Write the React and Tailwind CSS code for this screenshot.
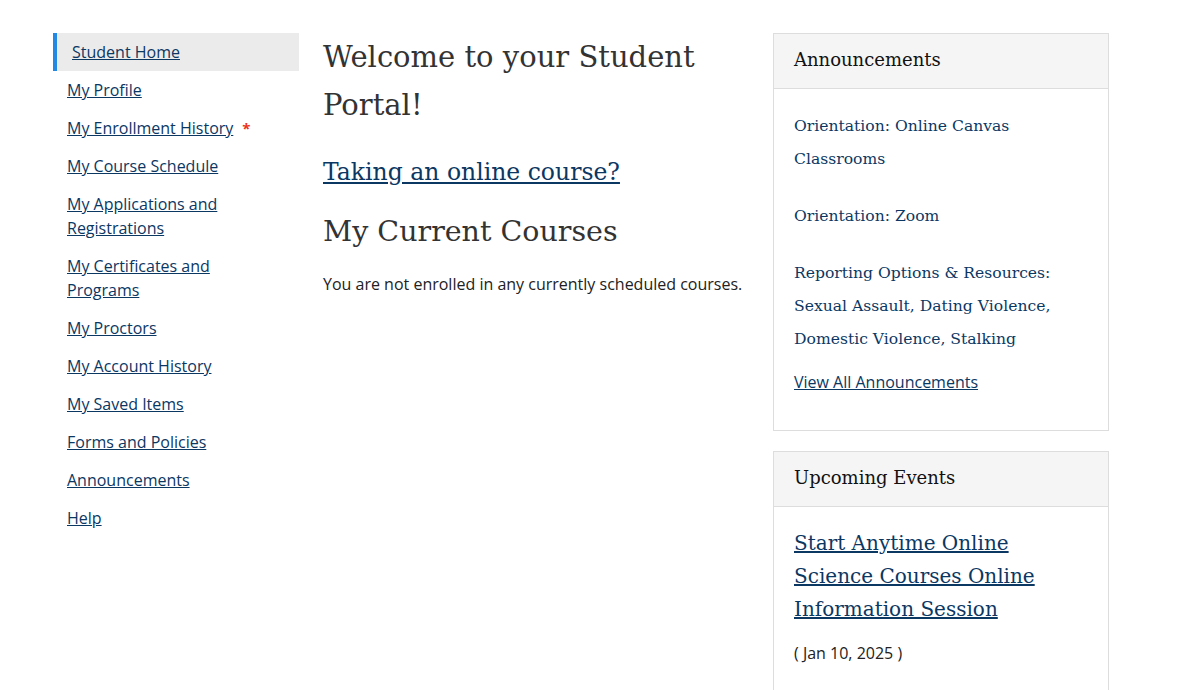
import React from "react";

const navLinks = [
  { label: "Student Home", active: true },
  { label: "My Profile" },
  { label: "My Enrollment History", flag: true },
  { label: "My Course Schedule" },
  { label: "My Applications and Registrations" },
  { label: "My Certificates and Programs" },
  { label: "My Proctors" },
  { label: "My Account History" },
  { label: "My Saved Items" },
  { label: "Forms and Policies" },
  { label: "Announcements" },
  { label: "Help" },
];

const announcements = [
  "Orientation: Online Canvas Classrooms",
  "Orientation: Zoom",
  "Reporting Options & Resources: Sexual Assault, Dating Violence, Domestic Violence, Stalking",
];

const sans = "font-['Open_Sans',sans-serif]";
const slab = "font-['DejaVu_Serif',serif]";

function SideNav() {
  return (
    <nav className="w-[246px] shrink-0">
      <ul>
        {navLinks.map((link) => (
          <li key={link.label}>
            {link.active ? (
              <a
                href="#"
                className="block border-l-4 border-[#2388e3] bg-[#ebebeb] py-[7px] pl-[15px] text-base leading-6 text-[#0b3763] underline"
              >
                {link.label}
              </a>
            ) : (
              <div className="max-w-[200px] py-[7px] pl-[14px] text-base leading-6">
                <a href="#" className="text-[#0b3763] underline">
                  {link.label}
                </a>
                {link.flag && (
                  <span className="ml-[9px] whitespace-nowrap text-[15px] font-bold text-[#ee3322]">*</span>
                )}
              </div>
            )}
          </li>
        ))}
      </ul>
    </nav>
  );
}

function Panel({ title, children }) {
  return (
    <section className="border border-[#dddddd] bg-white">
      <h2 className={`${slab} border-b border-[#dddddd] bg-[#f5f5f5] px-5 pb-[14px] pt-[12px] text-[18px] leading-7 text-[#111]`}>
        {title}
      </h2>
      {children}
    </section>
  );
}

export default function App() {
  return (
    <div className={`${sans} min-h-screen bg-white text-[#222]`}>
      <div className="flex pl-[53px] pt-[33px]">
        <SideNav />

        <main className="ml-6 w-[430px] shrink-0">
          <h1 className={`${slab} text-[29px] leading-[48px] text-[#333]`}>
            Welcome to your Student Portal!
          </h1>
          <a
            href="#"
            className={`${slab} mt-[22px] block text-[23.5px] leading-[42px] text-[#0b3763] underline`}
          >
            Taking an online course?
          </a>
          <h2 className={`${slab} mt-[15px] text-[28.5px] leading-[48px] text-[#333]`}>
            My Current Courses
          </h2>
          <p className="mt-4 text-base leading-6">
            You are not enrolled in any currently scheduled courses.
          </p>
        </main>

        <aside className="ml-5 flex w-[336px] shrink-0 flex-col gap-5">
          <Panel title="Announcements">
            <div className="px-5 pb-[36px] pt-[21px]">
              <ul className="flex flex-col gap-6">
                {announcements.map((item) => (
                  <li key={item}>
                    <a href="#" className={`${slab} text-[15.6px] leading-[33px] text-[#0b3763]`}>
                      {item}
                    </a>
                  </li>
                ))}
              </ul>
              <a href="#" className="mt-[14px] block text-base leading-6 text-[#0b3763] underline">
                View All Announcements
              </a>
            </div>
          </Panel>

          <Panel title="Upcoming Events">
            <div className="px-5 pb-8 pt-5">
              <a href="#" className={`${slab} block text-[20px] leading-[33px] text-[#0b3763] underline`}>
                Start Anytime Online Science Courses Online Information Session
              </a>
              <p className="mt-[15px] text-base leading-6">( Jan 10, 2025 )</p>
            </div>
          </Panel>
        </aside>
      </div>
    </div>
  );
}
